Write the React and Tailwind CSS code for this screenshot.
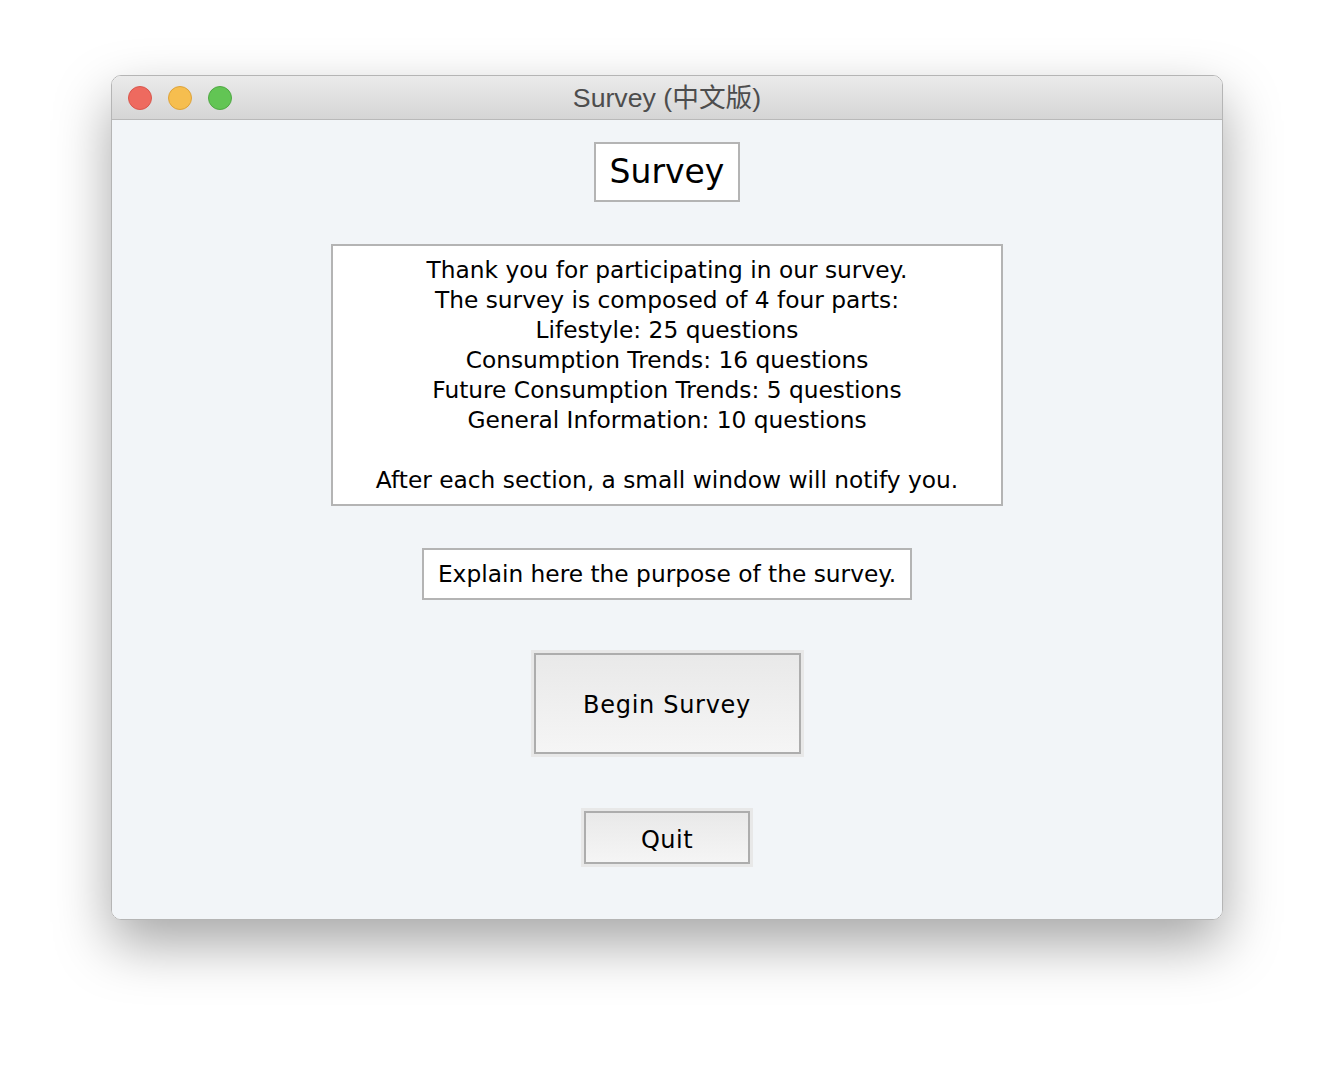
export default function App() {
  const lines = [
    "Thank you for participating in our survey.",
    "The survey is composed of 4 four parts:",
    "Lifestyle: 25 questions",
    "Consumption Trends: 16 questions",
    "Future Consumption Trends: 5 questions",
    "General Information: 10 questions",
    "\u00a0",
    "After each section, a small window will notify you.",
  ];
  return (
    <div className="w-[1334px] h-[1068px] bg-white flex flex-col items-center pt-[75px]">
      <div
        className="w-[1112px] h-[845px] rounded-[10px] flex flex-col overflow-hidden border border-[#b5b5b5] shadow-[0_24px_55px_rgba(0,0,0,0.35)]"
        style={{ fontFamily: '"DejaVu Sans", Verdana, sans-serif' }}
      >
        <div className="h-[44px] shrink-0 flex items-center relative bg-gradient-to-b from-[#ebebeb] to-[#d5d5d5] border-b border-[#b9b9b9]">
          <div className="flex gap-[16px] pl-[16px]">
            <div className="w-[24px] h-[24px] rounded-full bg-[#ee6a5f] border border-[#d9574d]" />
            <div className="w-[24px] h-[24px] rounded-full bg-[#f6be4f] border border-[#dea33a]" />
            <div className="w-[24px] h-[24px] rounded-full bg-[#62c554] border border-[#50a844]" />
          </div>
          <div
            className="absolute inset-0 flex items-center justify-center pt-[2px] text-[26.7px] text-[#4d4d4d]"
            style={{ fontFamily: '"Liberation Sans", "Noto Sans CJK SC", sans-serif' }}
          >
            Survey (中文版)
          </div>
        </div>
        <div className="flex-1 bg-[#f2f5f8] flex flex-col items-center text-black">
          <div className="mt-[22px] h-[60px] px-[14px] flex items-center bg-white border-2 border-[#b4b4b4] text-[33px]">
            Survey
          </div>
          <div className="mt-[42px] w-[672px] h-[262px] bg-white border-2 border-[#b4b4b4] flex flex-col items-center pt-[9px] text-[23.3px] leading-[30px]">
            {lines.map((l, i) => (
              <div key={i}>{l}</div>
            ))}
          </div>
          <div className="mt-[42px] h-[52px] px-[14px] flex items-center bg-white border-2 border-[#b4b4b4] text-[23.3px]">
            Explain here the purpose of the survey.
          </div>
          <div className="mt-[50px] p-[3px] bg-[#e8e8e8]">
            <div className="w-[267px] h-[101px] flex items-center justify-center pt-[3px] border-2 border-[#adadad] bg-gradient-to-b from-[#e9e9e9] to-[#f5f5f5] text-[24px] tracking-[0.7px]">
              Begin Survey
            </div>
          </div>
          <div className="mt-[51px] p-[3px] bg-[#e8e8e8]">
            <div className="w-[166px] h-[53px] flex items-center justify-center pt-[4px] border-2 border-[#adadad] bg-gradient-to-b from-[#e9e9e9] to-[#f5f5f5] text-[24px] tracking-[0.5px]">
              Quit
            </div>
          </div>
        </div>
      </div>
    </div>
  );
}
